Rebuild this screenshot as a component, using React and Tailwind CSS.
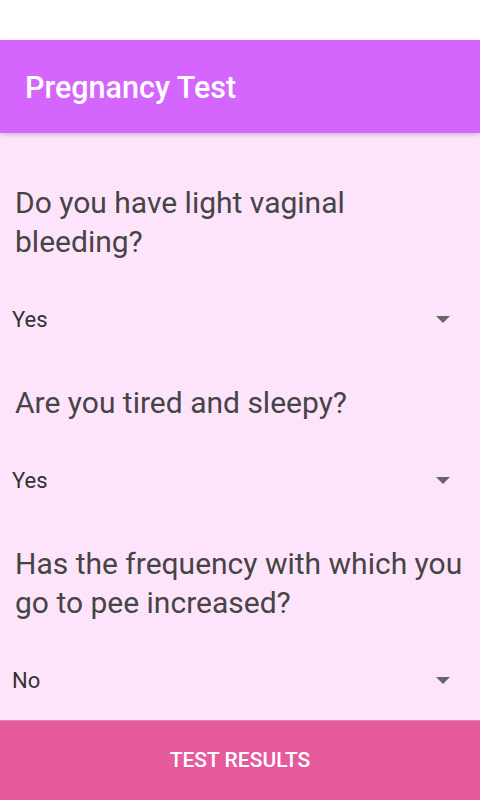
export default function App() {
  const questions = [
    { text: 'Do you have light vaginal bleeding?', answer: 'Yes' },
    { text: 'Are you tired and sleepy?', answer: 'Yes' },
    { text: 'Has the frequency with which you go to pee increased?', answer: 'No' },
  ];

  return (
    <div className="flex h-[800px] w-[480px] flex-col overflow-hidden bg-white" style={{ fontFamily: 'Roboto, "Noto Sans", sans-serif' }}>
      <div className="h-[40px] shrink-0 bg-white" />
      <header className="relative z-10 flex h-[93px] shrink-0 items-center bg-[#d465fd] px-[25px] pt-[3px] shadow-[0_2px_4px_rgba(0,0,0,0.18)]">
        <h1 className="text-[30.5px] font-medium leading-none text-white">Pregnancy Test</h1>
      </header>

      <main className="min-h-0 flex-1 overflow-hidden bg-[#fee4fb] pt-[50px]">
        {questions.map((q, i) => (
          <div key={i} className="mb-[49px] last:mb-0">
            <p className="mb-[45px] pl-[15px] pr-[12px] text-[30px] leading-[39px] text-[#454545]">{q.text}</p>
            <div className="flex items-center justify-between pl-[12px] pr-[30px]">
              <span className="text-[22px] leading-[28px] text-[#333333]">{q.answer}</span>
              <svg width="14" height="7" viewBox="0 0 14 7" className="mt-[-2px]">
                <path d="M0 0 H14 L7 7 Z" fill="#666666" />
              </svg>
            </div>
          </div>
        ))}
      </main>

      <button className="flex h-[80px] shrink-0 items-center justify-center border-t border-[#ec7fb4] bg-[#e45a9c] text-[21px] font-medium uppercase text-white">
        Test Results
      </button>
    </div>
  );
}
